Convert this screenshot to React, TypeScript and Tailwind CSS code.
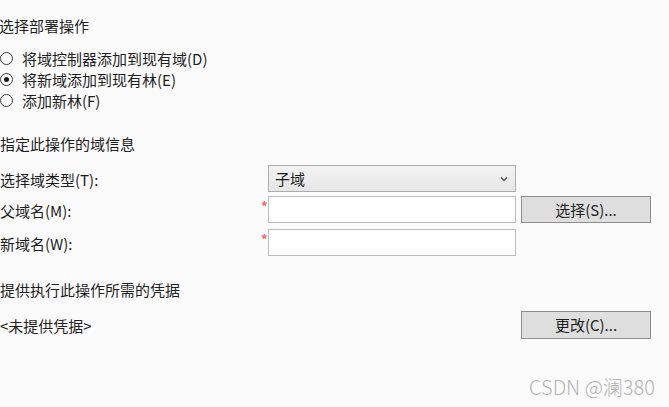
import React from 'react';

const Radio: React.FC<{ checked?: boolean; label: string }> = ({ checked, label }) => (
  <div className="flex h-[21px] items-center">
    <span className="flex h-[13px] w-[13px] shrink-0 items-center justify-center rounded-full border border-[#3a3a3a] bg-white">
      {checked && <span className="h-[5px] w-[5px] rounded-full bg-[#1a1a1a]" />}
    </span>
    <span className="ml-[9px] leading-[20px]">{label}</span>
  </div>
);

const Star: React.FC = () => (
  <span className="-ml-[1px] w-[7px] self-start pt-[5px] text-[13px] font-bold leading-[9px] text-[#ff6464]">*</span>
);

export default function App() {
  return (
    <div
      className="relative min-h-screen w-full overflow-hidden bg-[#fbfbfb] text-[15px] text-[#1e1e1e]"
      style={{ fontFamily: '"Noto Sans CJK SC", "Noto Sans", sans-serif' }}
    >
      <div className="pt-[16px] leading-[20px] -ml-[1px]">选择部署操作</div>

      <div className="mt-[12px] flex flex-col">
        <Radio label="将域控制器添加到现有域(D)" />
        <Radio checked label="将新域添加到现有林(E)" />
        <Radio label="添加新林(F)" />
      </div>

      <div className="mt-[23px] leading-[20px]">指定此操作的域信息</div>

      <div className="mt-[11px] flex flex-col">
        <div className="flex h-[27px] items-center">
          <div className="w-[268px] pt-[3px] leading-[20px]">选择域类型(T):</div>
          <div className="flex h-[27px] w-[248px] items-center justify-between border border-[#adadad] bg-gradient-to-b from-[#f3f3f3] to-[#e6e6e6] pl-[6px] pr-[7px]">
            <span className="leading-[20px]">子域</span>
            <svg width="8" height="6" viewBox="0 0 8 6" fill="none">
              <path d="M1 1.5 L4 4.5 L7 1.5" stroke="#555" strokeWidth="1.4" />
            </svg>
          </div>
        </div>

        <div className="mt-[4px] flex h-[27px] items-center">
          <div className="w-[262px] pt-[3px] leading-[20px]">父域名(M):</div>
          <Star />
          <div className="h-[27px] w-[248px] border-[1.5px] border-[#bdbdbd] bg-white" />
          <button className="ml-[5px] h-[27px] w-[130px] border-[1.5px] border-[#8e8e8e] bg-[#dedede] leading-[20px]">
            选择(S)...
          </button>
        </div>

        <div className="mt-[6px] flex h-[27px] items-center">
          <div className="w-[262px] pt-[3px] leading-[20px]">新域名(W):</div>
          <Star />
          <div className="h-[27px] w-[248px] border-[1.5px] border-[#bdbdbd] bg-white" />
        </div>
      </div>

      <div className="mt-[24px] leading-[20px]">提供执行此操作所需的凭据</div>

      <div className="mt-[11px] flex h-[28px] items-center">
        <div className="w-[521px] pt-[1px] leading-[20px]">&lt;未提供凭据&gt;</div>
        <button className="h-[28px] w-[130px] border-[1.5px] border-[#8e8e8e] bg-[#dedede] leading-[20px]">
          更改(C)...
        </button>
      </div>

      <div
        className="absolute left-[529px] top-[375px] text-[20px] font-light leading-[24px] text-[#b4b4b4]"
        style={{ fontFamily: '"Noto Sans CJK SC", "Noto Sans", sans-serif' }}
      >
        CSDN @澜380
      </div>
    </div>
  );
}
